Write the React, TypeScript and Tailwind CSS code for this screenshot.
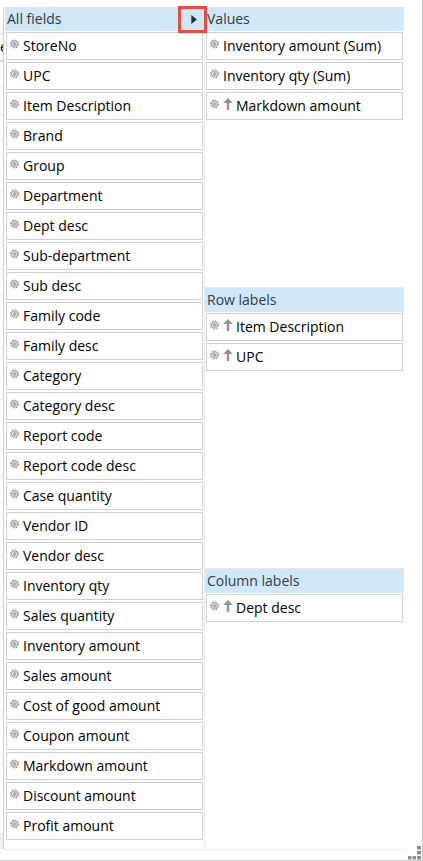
import React from "react";

const allFields = [
  "StoreNo", "UPC", "Item Description", "Brand", "Group", "Department", "Dept desc",
  "Sub-department", "Sub desc", "Family code", "Family desc", "Category", "Category desc",
  "Report code", "Report code desc", "Case quantity", "Vendor ID", "Vendor desc",
  "Inventory qty", "Sales quantity", "Inventory amount", "Sales amount",
  "Cost of good amount", "Coupon amount", "Markdown amount", "Discount amount", "Profit amount",
];

const gridRows = Array.from({ length: 28 }, (_, i) => i);

function Gear() {
  return (
    <svg className="mt-[6px] h-[10px] w-[10px] shrink-0" viewBox="0 0 10 10" fill="none">
      <circle cx="4.5" cy="5" r="4" stroke="#929292" strokeWidth="1.1" strokeDasharray="1.57 1.57" />
      <circle cx="4.5" cy="5" r="3.2" fill="#ededed" stroke="#949494" strokeWidth=".75" />
      <path d="M4.5 2v6M1.5 5h6M2.4 2.9l4.2 4.2M6.6 2.9L2.4 7.1" stroke="#a2a2a2" strokeWidth=".5" />
      <circle cx="4.5" cy="5" r="1" fill="#fafafa" stroke="#6f6f6f" strokeWidth=".7" />
    </svg>
  );
}

function Arrow() {
  return (
    <svg className="ml-[3px] mt-[5px] h-[12px] w-[10px] shrink-0" viewBox="0 0 10 12">
      <path d="M5 0L9.8 5H6.2V12H3.8V5H.2Z" fill="#929292" />
    </svg>
  );
}

function Field({ label, sorted }: { label: string; sorted?: boolean }) {
  return (
    <div className="mx-px flex h-7 border border-[#d0d0d0] bg-white pl-[3px]">
      <Gear />
      {sorted && <Arrow />}
      <span className="ml-[3px] whitespace-nowrap leading-[26px]">{label}</span>
    </div>
  );
}

function Section({ title, fields, sorted = [] }: { title: string; fields: string[]; sorted?: string[] }) {
  return (
    <>
      <div className="h-6 bg-[#d0e7f7] pl-[2px] leading-6 text-[#333c48]">{title}</div>
      <div className="flex flex-col gap-[2px] pt-px">
        {fields.map((f) => <Field key={f} label={f} sorted={sorted.includes(f)} />)}
      </div>
    </>
  );
}

export default function App() {
  return (
    <div className="relative flex h-[861px] w-[423px] overflow-hidden border-b border-r border-[#ccc] bg-white pt-[7px] font-['Open_Sans',sans-serif] text-[14px] text-black">
      <div className="flex h-[842px] w-[3px] shrink-0 flex-col overflow-hidden">
        <div className="h-[27px] shrink-0 border-b border-[#ddd]" />
        <div className="h-[28px] shrink-0 border-b-2 border-[#d6d6d6] leading-[25px]">e</div>
        {gridRows.map((i) => (
          <div key={i} className="h-[26px] shrink-0 border-b border-[#edf0f2]" />
        ))}
        <div className="mt-auto h-[16px] shrink-0 bg-[#eee]" />
      </div>
      <div className="h-[843px] w-px shrink-0 bg-[#ced0d8]" />
      <div className="flex h-[843px] w-[401px] shrink-0 border-b border-[#e6e8f0] pl-px">
        <div className="w-[199px]">
          <Section title="All fields" fields={allFields} />
        </div>
        <div className="w-px bg-[#e8e8f0]" />
        <div className="w-[199px]">
          <div className="h-[280px]">
            <Section title="Values" fields={["Inventory amount (Sum)", "Inventory qty (Sum)", "Markdown amount"]} sorted={["Markdown amount"]} />
          </div>
          <div className="h-[281px] border-t border-[#e8e8f0]">
            <Section title="Row labels" fields={["Item Description", "UPC"]} sorted={["Item Description", "UPC"]} />
          </div>
          <div className="border-t border-[#e8e8f0]">
            <Section title="Column labels" fields={["Dept desc"]} sorted={["Dept desc"]} />
          </div>
        </div>
      </div>
      <div className="absolute left-[178px] top-[6px] flex h-[27px] w-[29px] items-center justify-center border-[3px] border-[#eb4b48] pl-[3px]">
        <svg className="h-[9px] w-[6px]" viewBox="0 0 6 9"><path d="M.3 0L5.9 4.5L.3 9Z" fill="#20303c" /></svg>
      </div>
      <svg className="absolute bottom-0 right-0 h-[15px] w-[15px]" viewBox="0 0 15 15" fill="#8f8d93">
        <path d="M10 1h4v3.5h-4zM10 6h4v3.5h-4zM10 11h4v3.5h-4zM5.5 11h3.5v3.5H5.5zM1 11h3.5v3.5H1z" />
      </svg>
    </div>
  );
}
